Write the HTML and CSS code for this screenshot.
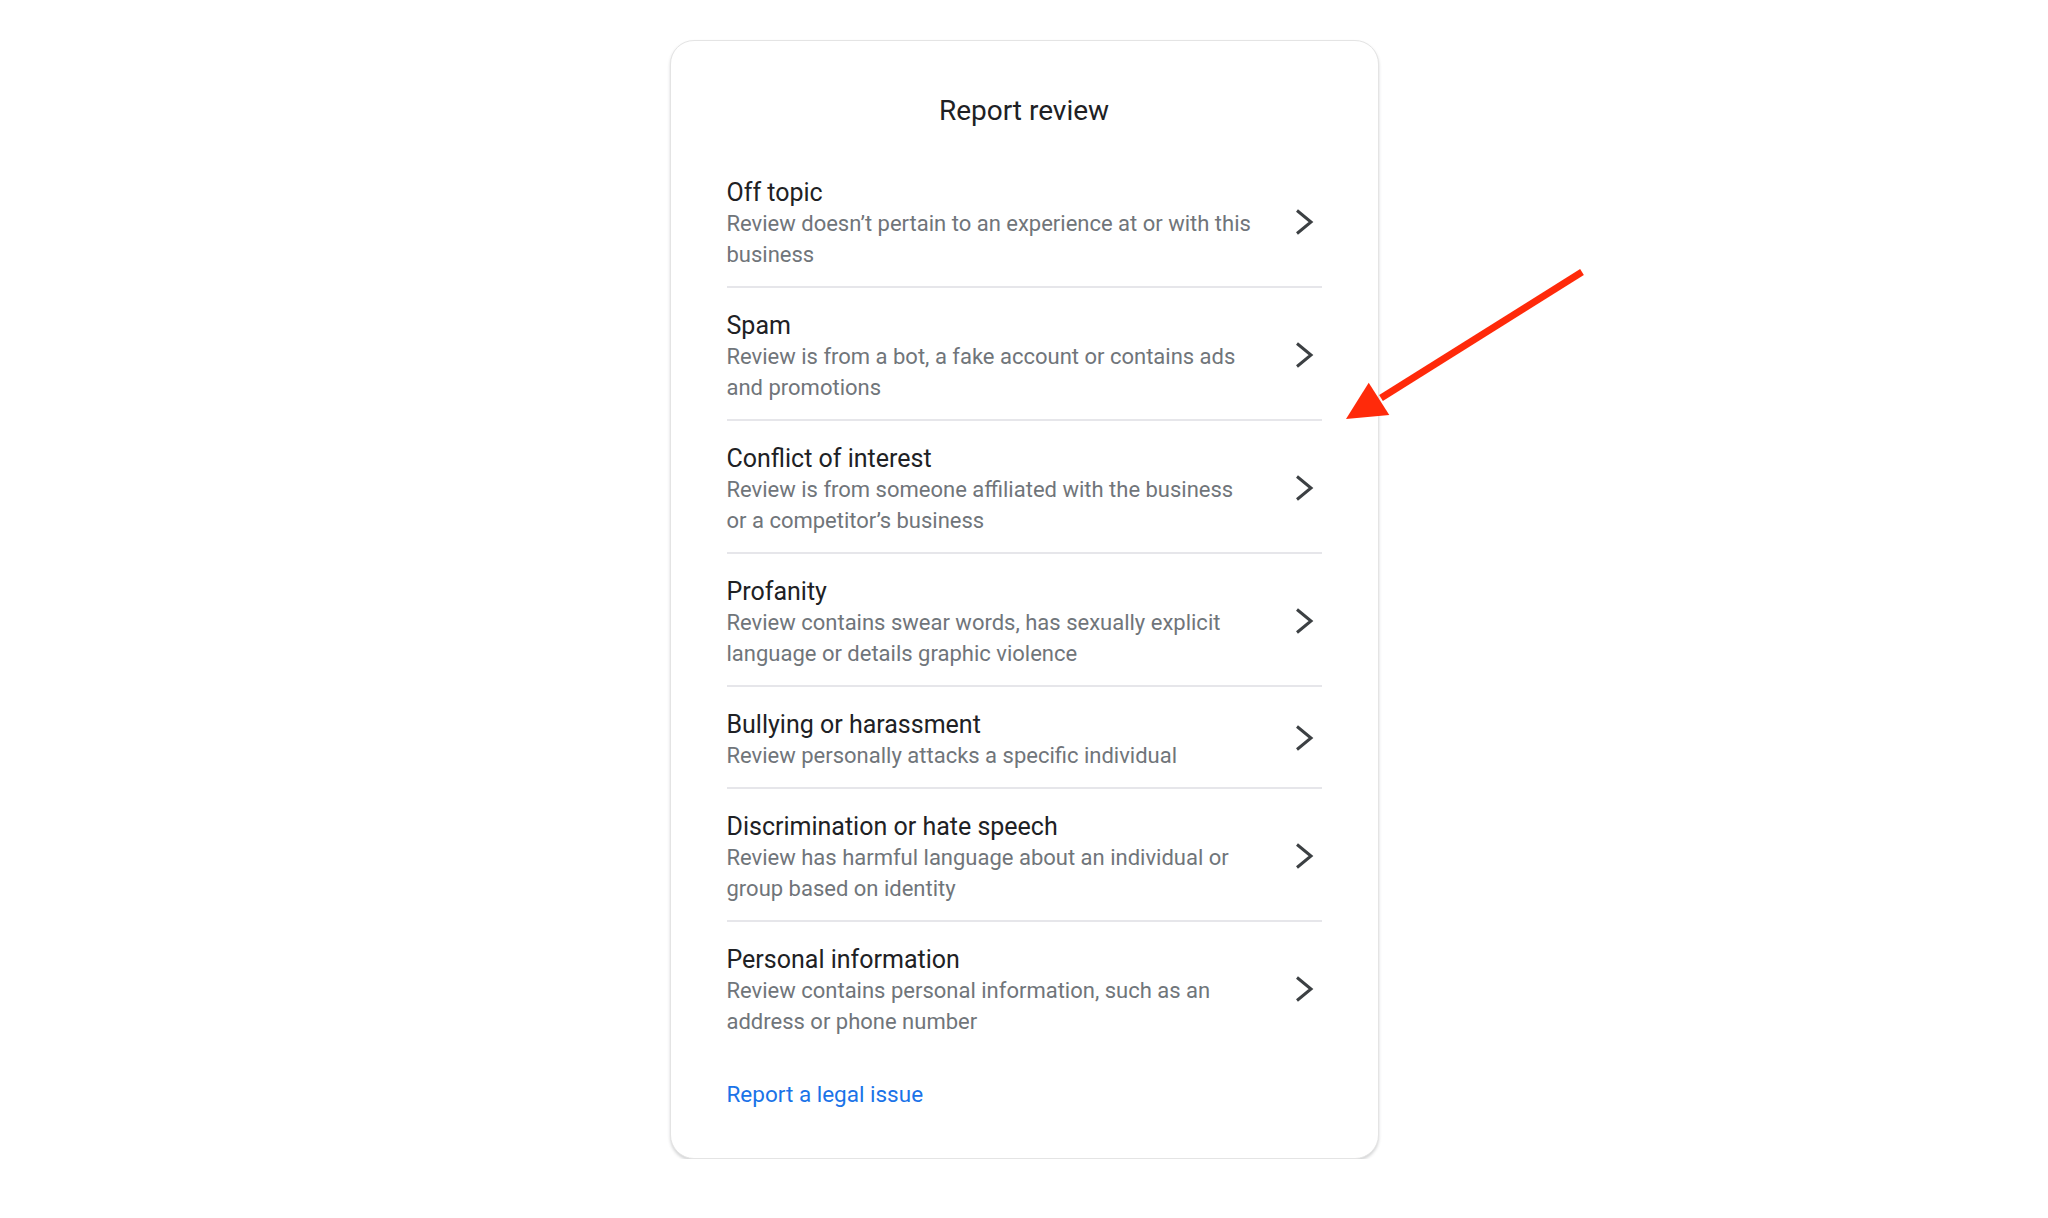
FILE: index.html
```html
<!DOCTYPE html>
<html lang="en">
<head>
    <meta charset="UTF-8">
    <meta name="viewport" content="width=device-width, initial-scale=1.0">
    <title>Report review</title>
    <link rel="stylesheet" href="styles.css">
</head>
<body>
    <div class="page">
        <div class="dialog">
            <h1 class="dialog-title">Report review</h1>
            <ul class="reasons">
                <li class="reason">
                    <div class="reason-text">
                        <div class="reason-name">Off topic</div>
                        <div class="reason-desc">Review doesn’t pertain to an experience at or with this business</div>
                    </div>
                    <svg class="chevron" viewBox="0 0 20 28"><polyline points="3,2.5 17,14 3,25.5"/></svg>
                </li>
                <li class="reason">
                    <div class="reason-text">
                        <div class="reason-name">Spam</div>
                        <div class="reason-desc">Review is from a bot, a fake account or contains ads and promotions</div>
                    </div>
                    <svg class="chevron" viewBox="0 0 20 28"><polyline points="3,2.5 17,14 3,25.5"/></svg>
                </li>
                <li class="reason">
                    <div class="reason-text">
                        <div class="reason-name">Conflict of interest</div>
                        <div class="reason-desc">Review is from someone affiliated with the business or a competitor’s business</div>
                    </div>
                    <svg class="chevron" viewBox="0 0 20 28"><polyline points="3,2.5 17,14 3,25.5"/></svg>
                </li>
                <li class="reason">
                    <div class="reason-text">
                        <div class="reason-name">Profanity</div>
                        <div class="reason-desc">Review contains swear words, has sexually explicit language or details graphic violence</div>
                    </div>
                    <svg class="chevron" viewBox="0 0 20 28"><polyline points="3,2.5 17,14 3,25.5"/></svg>
                </li>
                <li class="reason">
                    <div class="reason-text">
                        <div class="reason-name">Bullying or harassment</div>
                        <div class="reason-desc">Review personally attacks a specific individual</div>
                    </div>
                    <svg class="chevron" viewBox="0 0 20 28"><polyline points="3,2.5 17,14 3,25.5"/></svg>
                </li>
                <li class="reason">
                    <div class="reason-text">
                        <div class="reason-name">Discrimination or hate speech</div>
                        <div class="reason-desc">Review has harmful language about an individual or group based on identity</div>
                    </div>
                    <svg class="chevron" viewBox="0 0 20 28"><polyline points="3,2.5 17,14 3,25.5"/></svg>
                </li>
                <li class="reason">
                    <div class="reason-text">
                        <div class="reason-name">Personal information</div>
                        <div class="reason-desc">Review contains personal information, such as an address or phone number</div>
                    </div>
                    <svg class="chevron" viewBox="0 0 20 28"><polyline points="3,2.5 17,14 3,25.5"/></svg>
                </li>
            </ul>
            <a class="legal-link" href="#">Report a legal issue</a>

            <!-- red annotation arrow -->
            <svg class="annotation" viewBox="0 0 270 170" width="270" height="170">
                <line x1="251" y1="12" x2="50" y2="138" stroke="#ff2a0a" stroke-width="7"/>
                <polygon points="15,159 37.7,122.7 58.3,155" fill="#ff2a0a"/>
            </svg>
        </div>
    </div>
</body>
</html>
```

FILE: styles.css
```css
body {
    margin: 0;
    background: #fff;
    font-family: Roboto, "Liberation Sans", Arial, sans-serif;
    color: #202124;
}
.page {
    padding-top: 40px;
    display: flex;
    justify-content: center;
}
.dialog {
    position: relative;
    width: 709px;
    box-sizing: border-box;
    padding: 52px 56px 48px 56px;
    border: 1px solid #e4e4e4;
    border-radius: 24px;
    background: #fff;
    box-shadow: 0 2px 3px rgba(60, 64, 67, 0.22);
}
.dialog-title {
    margin: 0 0 26px 0;
    font-size: 28px;
    font-weight: 400;
    line-height: 36px;
    text-align: center;
    color: #202124;
}
.reasons {
    list-style: none;
    margin: 0;
    padding: 0;
}
.reason {
    display: flex;
    align-items: center;
    justify-content: space-between;
    padding: 22px 0 16px 0;
    border-bottom: 2px solid #e6e6ea;
    cursor: pointer;
}
.reason:last-child {
    border-bottom: none;
}
.reason-text {
    width: 528px;
}
.reason-name {
    font-size: 25px;
    line-height: 31px;
    color: #202124;
}
.reason-desc {
    font-size: 22px;
    line-height: 31px;
    color: #70757a;
}
.chevron {
    width: 20px;
    height: 28px;
    margin: 0 8px 4px 0;
    fill: none;
    stroke: #3c4043;
    stroke-width: 3;
}
.legal-link {
    display: inline-block;
    margin-top: 26px;
    font-size: 22.5px;
    line-height: 31px;
    color: #1a73e8;
    text-decoration: none;
}
.annotation {
    position: absolute;
    left: 660px;
    top: 219px;
    overflow: visible;
}
```
